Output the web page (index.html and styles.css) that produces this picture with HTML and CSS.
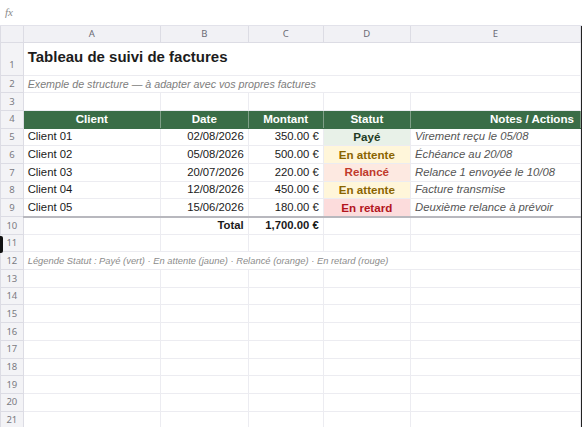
FILE: index.html
```html
<!DOCTYPE html>
<html lang="fr">
<head>
<meta charset="utf-8">
<title>Tableau de suivi de factures</title>
<link rel="stylesheet" href="styles.css">
</head>
<body>
<div class="app">
  <div class="formula"><span class="fx">fx</span></div>
  <div class="sheet">
    <table class="grid">
      <colgroup>
        <col class="c-rh"><col class="c-a"><col class="c-b"><col class="c-c"><col class="c-d"><col class="c-e">
      </colgroup>
      <thead>
        <tr class="colhead"><th class="corner"></th><th>A</th><th>B</th><th>C</th><th>D</th><th>E</th></tr>
      </thead>
      <tbody>
        <tr class="r-title"><th class="rh">1</th><td class="title" colspan="5">Tableau de suivi de factures</td></tr>
        <tr><th class="rh">2</th><td class="sub" colspan="5">Exemple de structure — à adapter avec vos propres factures</td></tr>
        <tr><th class="rh">3</th><td></td><td></td><td></td><td></td><td></td></tr>
        <tr class="hdr"><th class="rh">4</th><td>Client</td><td>Date</td><td>Montant</td><td>Statut</td><td class="notes-h">Notes / Actions</td></tr>
        <tr><th class="rh">5</th><td>Client 01</td><td class="num">02/08/2026</td><td class="num">350.00 €</td><td class="st paid">Payé</td><td class="note">Virement reçu le 05/08</td></tr>
        <tr><th class="rh">6</th><td>Client 02</td><td class="num">05/08/2026</td><td class="num">500.00 €</td><td class="st wait">En attente</td><td class="note">Échéance au 20/08</td></tr>
        <tr><th class="rh">7</th><td>Client 03</td><td class="num">20/07/2026</td><td class="num">220.00 €</td><td class="st rem">Relancé</td><td class="note">Relance 1 envoyée le 10/08</td></tr>
        <tr><th class="rh">8</th><td>Client 04</td><td class="num">12/08/2026</td><td class="num">450.00 €</td><td class="st wait">En attente</td><td class="note">Facture transmise</td></tr>
        <tr class="last"><th class="rh">9</th><td>Client 05</td><td class="num">15/06/2026</td><td class="num">180.00 €</td><td class="st late">En retard</td><td class="note">Deuxième relance à prévoir</td></tr>
        <tr><th class="rh">10</th><td></td><td class="num b">Total</td><td class="num b">1,700.00 €</td><td></td><td></td></tr>
        <tr><th class="rh">11</th><td></td><td></td><td></td><td></td><td></td></tr>
        <tr><th class="rh">12</th><td class="legend" colspan="5">Légende Statut : Payé (vert) · En attente (jaune) · Relancé (orange) · En retard (rouge)</td></tr>
        <tr><th class="rh">13</th><td></td><td></td><td></td><td></td><td></td></tr>
        <tr><th class="rh">14</th><td></td><td></td><td></td><td></td><td></td></tr>
        <tr><th class="rh">15</th><td></td><td></td><td></td><td></td><td></td></tr>
        <tr><th class="rh">16</th><td></td><td></td><td></td><td></td><td></td></tr>
        <tr><th class="rh">17</th><td></td><td></td><td></td><td></td><td></td></tr>
        <tr><th class="rh">18</th><td></td><td></td><td></td><td></td><td></td></tr>
        <tr><th class="rh">19</th><td></td><td></td><td></td><td></td><td></td></tr>
        <tr><th class="rh">20</th><td></td><td></td><td></td><td></td><td></td></tr>
        <tr><th class="rh">21</th><td></td><td></td><td></td><td></td><td></td></tr>
      </tbody>
    </table>
    <div class="cursor"></div>
  </div>
</div>
</body>
</html>
```

FILE: styles.css
```css
html, body {
  margin: 0;
  padding: 0;
  background: #ffffff;
}
.app {
  width: 582px;
  height: 427px;
  overflow: hidden;
  font-family: "Liberation Sans", Arial, sans-serif;
  position: relative;
}
.formula {
  height: 26px;
  border-bottom: 1px solid #e2e2ea;
  box-sizing: border-box;
  display: flex;
  align-items: center;
  padding-left: 5px;
  padding-bottom: 2px;
}
.fx {
  font-family: "Liberation Serif", serif;
  font-style: italic;
  font-size: 11px;
  color: #8a8a8a;
}
.sheet {
  position: relative;
  width: 580px;
  border-right: 2px solid #222;
  height: 401px;
}
.grid {
  border-collapse: collapse;
  table-layout: fixed;
  width: 580px;
}
.c-rh { width: 22.7px; }
.c-a { width: 137.3px; }
.c-b { width: 87.7px; }
.c-c { width: 75px; }
.c-d { width: 87.3px; }
.c-e { width: 170px; }

.grid td, .grid th {
  height: 17.7px;
  padding: 0 4px;
  box-sizing: border-box;
  border: 1px solid #ececf1;
  font-size: 11.3px;
  color: #1a1a1a;
  white-space: nowrap;
  overflow: visible;
  text-align: left;
  font-weight: normal;
  line-height: 1;
}
.grid .colhead th {
  height: 16px;
  background: #f1f1f5;
  color: #6b6b75;
  font-size: 9.5px;
  text-align: center;
  border: 1px solid #dcdce4;
  border-top: none;
  font-family: "Noto Sans", "Liberation Sans", sans-serif;
}
.grid th.rh {
  background: #f3f3f6;
  color: #7a7a82;
  font-size: 9.5px;
  text-align: center;
  padding: 0;
  border: 1px solid #dcdce4;
  font-family: "Noto Sans", "Liberation Sans", sans-serif;
}
.grid .r-title th.rh, .grid .r-title td {
  height: 33px;
}
.grid .r-title th.rh { vertical-align: bottom; padding-bottom: 5px; }
.grid td.title {
  font-size: 15px;
  font-weight: bold;
  color: #1c1c1c;
  padding-bottom: 4px;
}
.grid td.sub {
  font-style: italic;
  color: #7d7d7d;
  font-size: 10.7px;
  padding-top: 2px;
}
.grid .hdr td {
  background: #3a6d47;
  color: #ffffff;
  font-weight: bold;
  text-align: center;
  font-size: 11.6px;
  border: 1px solid #7f9f87;
  border-top-color: #3a6d47;
  border-bottom-color: #3a6d47;
}
.grid .hdr td.notes-h { text-align: right; padding-right: 6px; }
.grid td.num { text-align: right; }
.grid td.b { font-weight: bold; }
.grid td.st {
  text-align: center;
  font-weight: bold;
  font-size: 11.6px;
}
.grid td.paid { background: #e8f1e8; color: #1f3b23; }
.grid td.wait { background: #fff6da; color: #8a6400; }
.grid td.rem { background: #fde9e1; color: #c0392b; }
.grid td.late { background: #fcdcdc; color: #b3141c; }
.grid td.note {
  font-style: italic;
  color: #555555;
}
.grid .last td { border-bottom: 2px solid #b8b8be; }
.grid td.legend {
  font-style: italic;
  color: #8c8c8c;
  font-size: 9.4px;
}
.cursor {
  position: absolute;
  left: 0;
  top: 210px;
  width: 3px;
  height: 17px;
  background: #111;
  border-radius: 0 2px 2px 0;
}
```
